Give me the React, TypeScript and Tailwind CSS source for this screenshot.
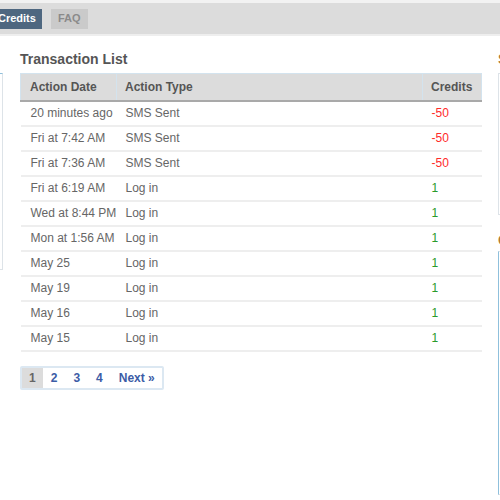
const rows = [
  { date: "20 minutes ago", type: "SMS Sent", credits: -50 },
  { date: "Fri at 7:42 AM", type: "SMS Sent", credits: -50 },
  { date: "Fri at 7:36 AM", type: "SMS Sent", credits: -50 },
  { date: "Fri at 6:19 AM", type: "Log in", credits: 1 },
  { date: "Wed at 8:44 PM", type: "Log in", credits: 1 },
  { date: "Mon at 1:56 AM", type: "Log in", credits: 1 },
  { date: "May 25", type: "Log in", credits: 1 },
  { date: "May 19", type: "Log in", credits: 1 },
  { date: "May 16", type: "Log in", credits: 1 },
  { date: "May 15", type: "Log in", credits: 1 },
];

const App = () => {
  return (
    <div
      className="relative h-[500px] w-[500px] overflow-hidden bg-white text-[12px] text-[#555]"
      style={{ fontFamily: "'Liberation Sans', Arial, sans-serif" }}
    >
      {/* tabs */}
      <div className="flex h-[36px] items-center gap-[9px] border-t-[3px] border-b-2 border-t-[#f2f2f2] border-b-[#eeeeee] bg-[#dcdcdc] text-[11px]">
        <span className="-ml-[8px] flex h-[20px] items-center bg-[#4e6780] px-[6px] font-bold text-white">
          Credits
        </span>
        <span className="flex h-[20px] items-center bg-[#cacaca] px-[7px] font-bold text-[#8a8a8a]">
          FAQ
        </span>
      </div>

      <div className="flex gap-[17px] pt-[14px]">
        <div className="-ml-[157px] w-[160px] shrink-0 pt-[23px]">
          <div className="h-[197px] border border-[#dde3e8] border-t-[#8fc0dc]" />
        </div>

        <div className="w-[461px] shrink-0">
          <h2 className="mb-[5px] text-[14px] font-bold leading-[18px] text-[#555]">
            Transaction List
          </h2>
          <table className="w-full table-fixed border-collapse whitespace-nowrap">
            <thead>
              <tr className="h-[27px] bg-[#dcdcdc] text-left font-bold text-[#555]">
                <th className="w-[96px] border border-b-2 border-[#d3e3ee] border-b-[#a9a9a9] pl-[9px]">
                  Action Date
                </th>
                <th className="w-[306px] border border-b-2 border-[#d3e3ee] border-b-[#a9a9a9] pl-[8px]">
                  Action Type
                </th>
                <th className="w-[59px] border border-b-2 border-[#d3e3ee] border-b-[#a9a9a9] pl-[8px]">
                  Credits
                </th>
              </tr>
            </thead>
            <tbody>
              {rows.map((r, i) => (
                <tr key={i} className="h-[25px] border-b-2 border-[#eeeeee] text-[#666]">
                  <td className="pl-[10px]">{r.date}</td>
                  <td className="pl-[9px]">{r.type}</td>
                  <td
                    className={
                      r.credits < 0
                        ? "pl-[9px] text-[#ff2a2a]"
                        : "pl-[9px] text-[#2a9a2a]"
                    }
                  >
                    {r.credits}
                  </td>
                </tr>
              ))}
            </tbody>
          </table>

          {/* pager */}
          <div className="mt-[14px] inline-flex h-[24px] items-center rounded-[2px] border-2 border-[#dce8f2] font-bold text-[#3c5ca6]">
            <span className="flex h-full items-center bg-[#dcdcdc] px-[7px] text-[#666]">
              1
            </span>
            <span className="px-[8px]">2</span>
            <span className="px-[8px]">3</span>
            <span className="px-[8px]">4</span>
            <span className="pl-[8px] pr-[7px]">Next »</span>
          </div>
        </div>

        <div className="w-[160px] shrink-0">
          <div className="h-[18px] text-[14px] font-bold leading-[18px] text-[#b07a3a]">
            Summary
          </div>
          <div className="mt-[5px] h-[142px] border border-[#dde3e8]" />
          <div className="mt-[16px] h-[18px] text-[14px] font-bold leading-[18px] text-[#b07a3a]">
            Other
          </div>
          <div className="mt-[2px] h-[244px] border border-[#dde3e8] border-l-[#8fc0dc]" />
        </div>
      </div>
    </div>
  );
};

export default App;
